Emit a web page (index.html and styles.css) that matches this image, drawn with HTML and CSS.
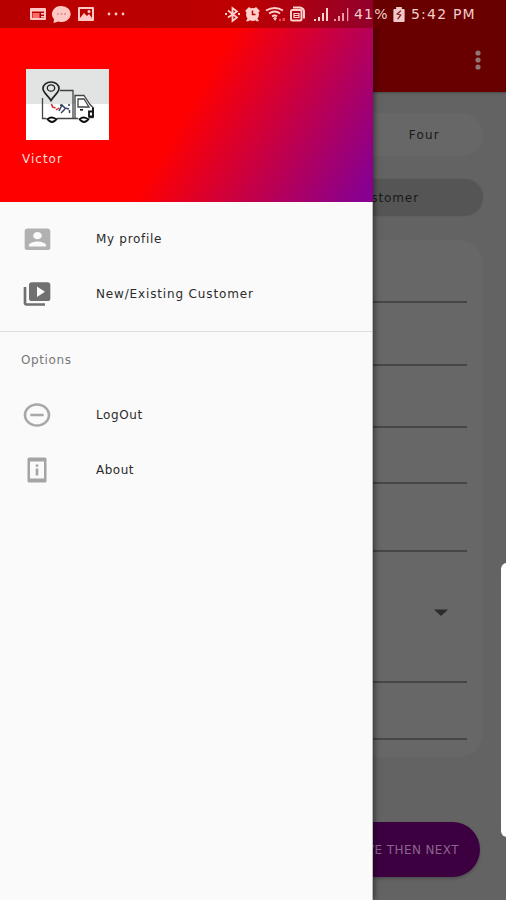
FILE: index.html
```html
<!DOCTYPE html>
<html lang="en">
<head>
<meta charset="utf-8">
<title>Customer</title>
<link rel="stylesheet" href="styles.css">
</head>
<body>
<div class="screen">
  <main class="page">
    <header class="appbar">
      <svg class="more" width="8" height="20" viewBox="0 0 8 20"><circle cx="4" cy="3" r="2.6"/><circle cx="4" cy="10" r="2.6"/><circle cx="4" cy="17" r="2.6"/></svg>
    </header>
    <div class="content">
      <div class="pill steps"><span>Four</span></div>
      <div class="pill kind"><span>Customer</span></div>
      <section class="form">
        <div class="field f1"></div>
        <div class="field f2"></div>
        <div class="field f3"></div>
        <div class="field f4"></div>
        <div class="field f5"></div>
        <div class="field select"><svg width="14" height="7" viewBox="0 0 14 7"><path d="M0 .5h14L7 7z"/></svg></div>
        <div class="field f6"></div>
      </section>
      <button class="next">SAVE THEN NEXT</button>
    </div>
  </main>

  <aside class="drawer">
    <header class="head">
      <svg class="logo" width="83" height="71" viewBox="0 0 83 71">
        <path fill="#fff" d="M0 0h83v71H0z"/><path fill="#e2e4e4" d="M0 0h83v35H0z"/>
        <path fill="#fff" d="M17 35h32v15H17zM50 27h9l8 12v10H50z"/>
        <g fill="none" stroke="#444" stroke-width="1.3">
          <path d="M34 21.500h13V50M16.500 29v20.500h4M31 49.500h21M49 50V26.500h9l6 9 3 3v10h-4M52 38v-8h6l5 8z"/>
          <path stroke="#222" stroke-width="1.7" d="M25 31.500c-3-5-8-8-8-12a8 6.500 0 0 1 16 0c0 4-5 7-8 12z"/>
          <ellipse cx="25" cy="19" rx="3.700" ry="3.200" stroke="#222"/>
          <path stroke="#111" stroke-width="1.8" d="M21 49.500q5 7 10 0M22 50q3-3 8 0M53 49.500q5 7 10 0M54 50q3-3 8 0M67 38.500v9h-4v-5h4"/>
          <path stroke="#d22" stroke-width="1.5" d="M25.500 35l1 3 3 1M30 41l3-2"/>
          <path stroke="#346" stroke-width="1.5" d="M33 42l3-6 3 3 4 1M35 44l4-4M43 35v2M43.500 41v3M34 36l3 1"/>
        </g>
        <path fill="#111" d="M54 40h3v1.600h-3z"/>
      </svg>
      <div class="user">Victor</div>
    </header>
    <nav>
      <a class="item"><svg width="30" height="30" viewBox="0 0 24 24"><path transform="matrix(1.140 0 0 .96 -1.300 .7)" fill="#b1b1b1" d="M3 5v14c0 1.100.89 2 2 2h14c1.100 0 2-.9 2-2V5c0-1.100-.9-2-2-2H5c-1.110 0-2 .9-2 2zm12 4c0 1.660-1.340 3-3 3s-3-1.340-3-3 1.340-3 3-3 3 1.340 3 3zm-9 8c0-2 4-3.100 6-3.100s6 1.100 6 3.100v1H6v-1z"/></svg><span class="t1">My profile</span></a>
      <a class="item"><svg width="32" height="28" viewBox="0 0 24 24" preserveAspectRatio="none"><path fill="#707070" d="M4 6H2v14c0 1.100.9 2 2 2h14v-2H4V6zm16-4H8c-1.100 0-2 .9-2 2v12c0 1.100.9 2 2 2h12c1.100 0 2-.9 2-2V4c0-1.100-.9-2-2-2zm-8 12.500v-9l6 4.500-6 4.500z"/></svg><span class="t2">New/Existing Customer</span></a>
      <div class="group">Options</div>
      <a class="item"><svg width="32" height="28" viewBox="0 0 24 24" preserveAspectRatio="none"><path fill="#a8a8a8" d="M7 11v2h10v-2H7zm5-9C6.480 2 2 6.480 2 12s4.480 10 10 10 10-4.480 10-10S17.520 2 12 2zm0 18c-4.410 0-8-3.590-8-8s3.590-8 8-8 8 3.590 8 8-3.590 8-8 8z"/></svg><span class="t3">LogOut</span></a>
      <a class="item"><svg width="32" height="28" viewBox="0 0 32 28"><path fill="#a4a4a4" fill-rule="evenodd" d="M8 1.500h16q1.500 0 1.500 1.500v22q0 1.500-1.500 1.500H8q-1.500 0-1.500-1.500V3q0-1.500 1.500-1.500zM9 5.500v17h14v-17zM14.700 8.500h2.600v2.200h-2.600zm0 4h2.600v7h-2.600z"/></svg><span class="t4">About</span></a>
    </nav>
  </aside>

  <div class="status">
    <svg class="left" width="100" height="20" viewBox="0 0 100 20">
      <g fill="#ffc8c4">
        <path fill-rule="evenodd" d="M1 4h14q1 0 1 1v10q0 1-1 1H1q-1 0-1-1V5q0-1 1-1zM2 7.500v6.500h12V7.500z"/><path fill="#f76b68" d="M2.500 9h7v5h-7z"/><path d="M11 9h3v1.500h-3zM11 12h3v1.500h-3z"/>
        <path d="M31.500 2a9 8 0 1 1-3 15.500L23.500 19l.5-4A9 8 0 0 1 31.500 2z"/>
        <path fill-rule="evenodd" d="M49 3h14q1 0 1 1v12q0 1-1 1H49q-1 0-1-1V4q0-1 1-1zM50 5v9l4-5 3 3 2-2 3 4V5z"/><circle cx="59" cy="7.500" r="1.500"/>
        <circle cx="79" cy="10" r="1.400"/><circle cx="86" cy="10" r="1.400"/><circle cx="93" cy="10" r="1.400"/>
      </g>
      <g fill="#d98886"><circle cx="28" cy="10" r=".9"/><circle cx="31.500" cy="10" r=".9"/><circle cx="35" cy="10" r=".9"/></g>
    </svg>
    <svg class="right" width="126" height="20" viewBox="0 0 126 20">
      <g fill="none" stroke="#ffd0cc" stroke-width="1.800">
        <path d="M3 6.500l9 7L7.500 17V4L12 7.500l-9 6M0 10h2M13 10h2"/>
        <path d="M41 6.500q9-5 17 0M44 9.500q6-4 11 0M47 12.500q3-2 5 0"/>
        <path d="M66 7.500q0-1.500 1.500-1.500h7.500q1.500 0 1.500 1.500V15q0 1.500-1.500 1.500h-7.500q-1.500 0-1.500-1.500zM68 3.500h7q4 1 4 4v7" stroke-width="2"/>
        <path d="M69 9.500h5v4h-5zM69 11.500h5" stroke-width="1.200"/>
      </g>
      <g fill="#ffd0cc">
        <circle cx="27.500" cy="10.500" r="6.500"/><path d="M20 7l4-4 2 1.500-4 4zM35 7l-4-4-2 1.500 4 4zM21 17l2-3 2 2-2 1.500zM34 17l-2-3-2 2 2 1.500z"/>
        <path d="M48 14l2 3 2-3-2-1zM89 15h2v2h-2zM93 13h2v4h-2zM97 9h2v8h-2zM101 4h2v13h-2z"/>
      </g>
      <g fill="#eb9aa4"><path d="M109 15h2v2h-2zM113 12h2v5h-2zM117 9h2v8h-2zM122 4h1.300v13H122z"/></g>
      <path fill="#f04450" d="M54 15h2v2h-2zM57.500 14h2.500v3h-2.500z"/>
      <path d="M27.500 6.500v4h3" fill="none" stroke="#bd0000" stroke-width="1.500"/>
    </svg>
    <span class="pct">41%</span>
    <svg class="bat" width="12" height="15" viewBox="0 0 12 16"><path fill="#f1c9c9" d="M3 0h6v2h2q1 0 1 1v12q0 1-1 1H1q-1 0-1-1V3q0-1 1-1h2z"/><path fill="none" stroke="#801515" stroke-width="1.200" d="M8 4L4 7.500l4 1L4.500 13"/></svg>
    <span class="time">5:42 PM</span>
  </div>
  <div class="edge"></div>
</div>
</body>
</html>
```
FILE: styles.css
```css
* { box-sizing: border-box; }
body { margin: 0; font-family: "DejaVu Sans", sans-serif; }
.screen { position: relative; width: 506px; height: 900px; overflow: hidden; background: #636363; }
.page { height: 900px; display: flex; flex-direction: column; }
.appbar { height: 92px; flex: none; background: #680000; display: flex; justify-content: flex-end; padding: 50px 24px 0 0; box-shadow: 0 1px 2px #484848; }
.more { fill: #8f7474; }
.content { display: flex; flex-direction: column; padding: 21px 23px 0 20px; }
.pill { display: flex; align-items: center; justify-content: flex-end; font-size: 12px; color: #191919; flex: none; }
.steps { height: 43px; border-radius: 22px; background: #676767; padding-right: 43px; letter-spacing: 1.2px; }
.kind { height: 37px; margin-top: 23px; border-radius: 19px; background: #555; padding-right: 64px; letter-spacing: .9px; box-shadow: 0 0 0 1px #606060; }
.form { height: 517px; margin-top: 24px; border-radius: 24px; background: #676767; padding: 0 16px; display: flex; flex-direction: column; flex: none; }
.field { border-bottom: 2px solid #464646; flex: none; }
.f1 { height: 63px; }
.f2 { height: 63px; }
.f3 { height: 62px; }
.f4 { height: 56px; }
.f5 { height: 68px; }
.select { height: 131px; display: flex; justify-content: flex-end; padding: 57px 19px 0 0; fill: #2c2c2c; }
.f6 { height: 57px; }
.next { width: 240px; height: 55px; align-self: flex-end; margin: 65px 3px 0 0; border: 0; border-radius: 28px; background: #3c0041; color: #89658c; font: 12px "DejaVu Sans", sans-serif; letter-spacing: .4px; text-align: right; padding: 0 21px 0 0; box-shadow: 0 2px 3px #505050; }
.drawer { position: absolute; left: 0; top: 0; width: 373px; height: 900px; background: #fafafa; border-right: 1px solid #bbb; box-shadow: 1px 0 6px rgba(0, 0, 0, .55); }
.head { width: 373px; height: 202px; padding: 69px 0 0 22px; background: linear-gradient(120deg, #f00 0%, #f00 51%, #880090 97%); }
.logo { display: block; margin-left: 4px; }
.user { margin-top: 11px; font-size: 12px; line-height: 16px; color: #ffdcd8; letter-spacing: 1px; }
.item { height: 55.500px; display: flex; align-items: center; padding-left: 21px; font-size: 12px; color: #2b2b2b; }
.item svg { flex: none; width: 32px; }
.item span { margin-left: 43px; }
nav { padding-top: 9px; }
.group { margin-top: 9px; height: 56px; padding: 20px 0 0 21px; border-top: 1px solid #ddd; font-size: 12px; line-height: 16px; color: #777; letter-spacing: .6px; }
.t1 { letter-spacing: .7px; }
.t2 { letter-spacing: .85px; }
.t3 { letter-spacing: .6px; }
.t4 { letter-spacing: .5px; }
.status { position: absolute; left: 0; top: 0; width: 506px; height: 28px; display: flex; align-items: center; background: linear-gradient(90deg, #b80000 0, #bd0000 240px, #92002b 373px, #680000 373px); color: #f5cccc; font-size: 14px; }
.left { margin: 0 0 0 30px; }
.right { margin-left: 95px; }
.pct { width: 35px; margin-left: 3px; letter-spacing: 1.2px; white-space: nowrap; }
.bat { margin-left: 4px; }
.time { margin-left: 6px; letter-spacing: 1.2px; white-space: nowrap; }
.edge { position: absolute; left: 501px; top: 563px; width: 15px; height: 274px; border-radius: 6px; background: #fff; }
```
